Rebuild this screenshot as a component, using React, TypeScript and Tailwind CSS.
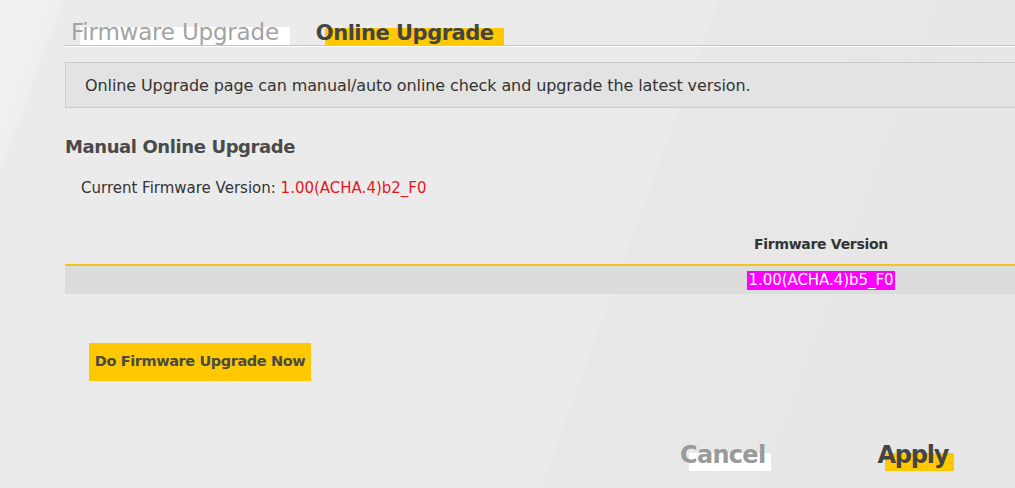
import React from "react";

function Hi({ children, box, text }: { children: React.ReactNode; box: string; text: string }) {
  return (
    <span className={`relative inline-block ${text}`}>
      <span className={`absolute ${box}`} />
      <span className="relative">{children}</span>
    </span>
  );
}

export default function App() {
  return (
    <div className="w-[1015px] h-[488px] overflow-hidden bg-[#ebebeb] bg-[linear-gradient(110deg,#f1f1f1_0%,#efefef_5%,#ebebeb_5.5%,#ebebeb_60%,#e8e8e8_60.5%,#e6e6e6_100%)] font-['DejaVu_Sans',sans-serif] text-[#333]">
      <div className="pl-[65px]">
        {/* Tabs */}
        <div className="flex items-end h-[46px] pl-[6px] gap-[37px] border-b border-[#c4c4c4] shadow-[0_1px_0_#ffffff]">
          <Hi text="text-[23px] text-[#a3a3a3] leading-[25px] tracking-[-0.2px]" box="left-[9px] right-[-11px] top-[7px] bottom-[0px] bg-white">
            Firmware Upgrade
          </Hi>
          <Hi text="text-[21px] font-bold text-[#444] leading-[24px] tracking-[-0.5px]" box="left-[9px] right-[-11px] top-[7px] bottom-[0px] bg-[#ffc800]">
            Online Upgrade
          </Hi>
        </div>

        {/* Info box */}
        <div className="mt-[16px] h-[46px] flex items-center pl-[19px] pt-[2px] bg-[#e3e3e3] border border-r-0 border-[#cbcbcb] text-[16px] text-[#333] tracking-[-0.1px]">
          Online Upgrade page can manual/auto online check and upgrade the latest version.
        </div>

        {/* Section */}
        <div className="mt-[27px] text-[18px] font-bold text-[#4a4a4a] leading-[24px] tracking-[-0.4px]">Manual Online Upgrade</div>
        <div className="mt-[19px] pl-[16px] text-[15px] leading-[20px]">
          Current Firmware Version: <span className="text-[#e8161b]">1.00(ACHA.4)b2_F0</span>
        </div>

        {/* Table */}
        <div className="mt-[35px] grid grid-cols-[562px_1fr]">
          <div className="h-[33px] border-b-2 border-[#f2c318]" />
          <div className="h-[33px] pt-[2px] border-b-2 border-[#f2c318] flex items-start justify-center text-[14px] font-bold text-[#333] leading-[18px] tracking-[-0.3px]">
            Firmware Version
          </div>
          <div className="h-[28px] bg-[#dcdcdc]" />
          <div className="h-[28px] bg-[#dcdcdc] flex items-center justify-center">
            <span className="bg-[#ff00ff] text-white text-[15px] leading-[19px] px-[1px] tracking-[-0.05px]">1.00(ACHA.4)b5_F0</span>
          </div>
        </div>

        {/* Button */}
        <div className="mt-[49px] pl-[24px]">
          <div className="inline-flex items-center justify-center w-[222px] h-[38px] bg-[#ffc800] text-[14.5px] font-bold text-[#4a4a4a] tracking-[-0.4px]">
            Do Firmware Upgrade Now
          </div>
        </div>

        {/* Footer buttons */}
        <div className="mt-[59px] flex pl-[615px] gap-[112px]">
          <Hi text="text-[24px] font-bold text-[#9a9a9a] leading-[30px] tracking-[-0.7px]" box="left-[9px] right-[-6px] top-[13px] bottom-[-1px] bg-white">
            Cancel
          </Hi>
          <Hi text="text-[24px] font-bold text-[#444] leading-[30px] tracking-[-1.2px]" box="left-[8px] right-[-6px] top-[13px] bottom-[-1px] bg-[#ffc800]">
            Apply
          </Hi>
        </div>
      </div>
    </div>
  );
}
